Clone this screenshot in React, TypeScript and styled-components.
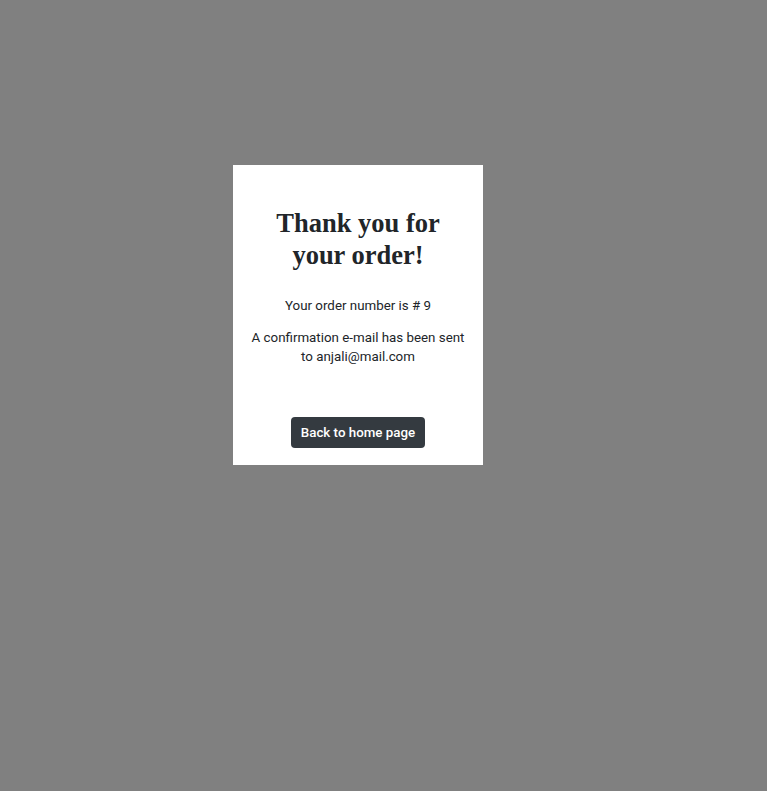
import React from 'react';
import styled, { createGlobalStyle } from 'styled-components';

const GlobalStyle = createGlobalStyle`
  html, body {
    margin: 0;
    padding: 0;
    background: #808080;
  }
  body {
    min-height: 791px;
    font-family: Roboto, "Liberation Sans", Arial, sans-serif;
    color: #212529;
  }
`;

const Page = styled.div`
  padding: 165px 0 0 233px;
`;

const Card = styled.div`
  box-sizing: border-box;
  width: 250px;
  height: 300px;
  background: #fff;
  padding: 42px 14px 17px;
  display: flex;
  flex-direction: column;
  align-items: center;
  text-align: center;
`;

const Title = styled.h1`
  margin: 0 0 25px;
  font-family: "Liberation Serif", "Times New Roman", serif;
  font-weight: 700;
  font-size: 26.5px;
  line-height: 32px;
  color: #212529;
`;

const Text = styled.p`
  margin: 0 0 13px;
  font-size: 13.33px;
  line-height: 19px;
`;

const Button = styled.button`
  margin-top: auto;
  border: none;
  border-radius: 4px;
  background: #343a40;
  color: #fff;
  font-family: Roboto, "Liberation Sans", Arial, sans-serif;
  font-weight: 500;
  font-size: 13.33px;
  line-height: 21px;
  padding: 5px 10px;
  cursor: pointer;
`;

const App: React.FC = () => {
  return (
    <>
      <GlobalStyle />
      <Page>
        <Card>
          <Title>
            Thank you for
            <br />
            your order!
          </Title>
          <Text>Your order number is # 9</Text>
          <Text>A confirmation e-mail has been sent to anjali@mail.com</Text>
          <Button type="button">Back to home page</Button>
        </Card>
      </Page>
    </>
  );
};

export default App;
